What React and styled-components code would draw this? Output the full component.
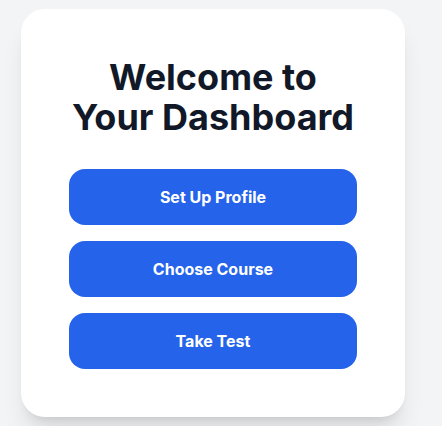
import styled, { createGlobalStyle } from "styled-components";

const GlobalStyle = createGlobalStyle`
  * {
    box-sizing: border-box;
  }
  body {
    margin: 0;
    background-color: #f3f4f6;
    font-family: Inter, "Liberation Sans", sans-serif;
    overflow: hidden;
  }
`;

// dashboard welcome card with the three start buttons
const items = ["Set Up Profile", "Choose Course", "Take Test"];

const App = () => {
  return (
    <Page>
      <GlobalStyle />
      <Card>
        <Title>
          Welcome to
          <br />
          Your Dashboard
        </Title>
        <Actions>
          {items.map((label) => (
            <Button key={label}>{label}</Button>
          ))}
        </Actions>
      </Card>
    </Page>
  );
};

const Page = styled.div`
  min-height: 100vh;
  display: flex;
  align-items: center;
  justify-content: center;
  padding-right: 16px;
`;

const Card = styled.div`
  width: 384px;
  background-color: #ffffff;
  border-radius: 24px;
  padding: 48px;
  box-shadow: 0 20px 25px -5px rgba(0, 0, 0, 0.1),
    0 8px 10px -6px rgba(0, 0, 0, 0.1);
`;

const Title = styled.h1`
  margin: 0 0 32px 0;
  text-align: center;
  font-size: 36px;
  line-height: 40px;
  font-weight: 700;
  color: #111827;
`;

const Actions = styled.div`
  display: flex;
  flex-direction: column;
  gap: 16px;
`;

const Button = styled.button`
  height: 56px;
  width: 100%;
  border: none;
  border-radius: 16px;
  background-color: #2563eb;
  color: #ffffff;
  font-family: Inter, "Liberation Sans", sans-serif;
  font-size: 16px;
  font-weight: 700;
  cursor: pointer;
`;

export default App;
